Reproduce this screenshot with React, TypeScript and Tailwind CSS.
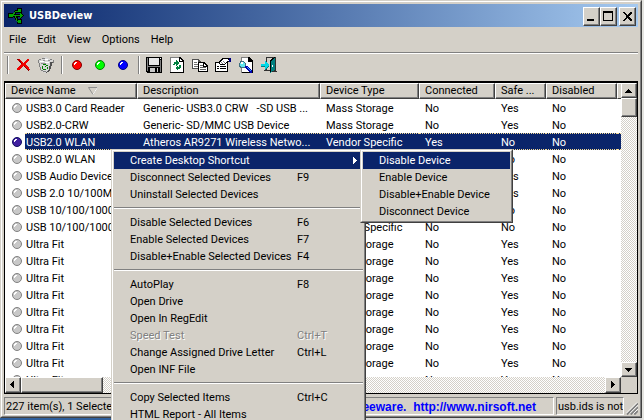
import type { ReactNode } from "react";

const BEVEL =
  "border border-t-white border-l-white border-r-[#404040] border-b-[#404040] shadow-[inset_-1px_-1px_0_#808080]";
const TRACK = "bg-[repeating-conic-gradient(#ffffff_0_25%,#d4d0c8_0_50%)] bg-[length:2px_2px]";

type Device = { name: string; description: string; type: string; connected: string; safe: string; disabled: string };

const storage = (name: string, description: string): Device => ({
  name,
  description,
  type: "Mass Storage",
  connected: "No",
  safe: "Yes",
  disabled: "No",
});
const vendor = (name: string, description: string, connected: string): Device => ({
  name,
  description,
  type: "Vendor Specific",
  connected,
  safe: "No",
  disabled: "No",
});

const devices: Device[] = [
  storage("USB3.0 Card Reader", "Generic- USB3.0 CRW   -SD USB ..."),
  storage("USB2.0-CRW", "Generic- SD/MMC USB Device"),
  vendor("USB2.0 WLAN", "Atheros AR9271 Wireless Netwo...", "Yes"),
  vendor("USB2.0 WLAN", "", "No"),
  { ...storage("USB Audio Device", ""), type: "Audio" },
  { ...storage("USB 2.0 10/100M", ""), type: "" },
  vendor("USB 10/100/1000", "", "No"),
  vendor("USB 10/100/1000", "", "No"),
  ...Array.from({ length: 9 }, () => storage("Ultra Fit", "")),
];

const columns = [
  { label: "Device Name", width: "w-[132px]" },
  { label: "Description", width: "w-[183px]" },
  { label: "Device Type", width: "w-[99px]" },
  { label: "Connected", width: "w-[76px]" },
  { label: "Safe ...", width: "w-[51px]" },
  { label: "Disabled", width: "w-[71px]" },
];

function Icon({ children, size = 16 }: { children: ReactNode; size?: number }) {
  return (
    <svg width={size} height={size} viewBox={`0 0 ${size} ${size}`} shapeRendering="crispEdges" aria-hidden="true">
      {children}
    </svg>
  );
}

function UsbLogo() {
  return (
    <svg width="16" height="16" viewBox="0 0 16 16" shapeRendering="crispEdges" aria-hidden="true">
      <path d="M4 7h10M6 7L8 3h3M7 8l3 5h2" fill="none" stroke="#000" strokeWidth="3" />
      <path d="M0 5h5v5H0zM9 0h5v5H9zM9 11h5v5H9zM12 4l4 3-4 4z" fill="#000" />
      <path d="M4 7h9M5 7l3-4h2M7 7l2 6h2" fill="none" stroke="#0a9a0a" strokeWidth="1" />
      <path d="M1 6h4v3H1zM10 1h3v3h-3zM10 12h3v3h-3zM12 5l3 2-3 3z" fill="#00a800" />
    </svg>
  );
}

function Cross() {
  return (
    <Icon>
      <path d="M2 2h3l3 4 4-4h2v1l-4 4 4 4 1 2h-2l-5-4-4 4H2v-2l4-4-4-4z" fill="#f00000" />
      <path d="M2 2h1l4 5M9 9l5 5" stroke="#900000" fill="none" />
    </Icon>
  );
}

function Recycle() {
  return (
    <Icon>
      <path d="M1 3l4-2 2-1 3 1 5 2-1 3-2 8-5 2-5-3z" fill="#d8d8d8" />
      <path d="M12 5h3l-3 9-4 2v-1l3-2z" fill="#505050" />
      <path d="M0 3h1v3H0zM1 6h1v4H1zM2 10h1v3H2zM3 13h2v1H3zM5 14h3v1H5zM1 2h2v1H1zM4 1h3v1H4zM12 2h2v1h-2zM15 3h1v3h-1z" fill="#808080" />
      <path d="M2 4h4v1H2zM7 2h3v1H7zM7 5h4v1H7z" fill="#fff" />
      <path d="M5 3h2v1H5zM10 3h2v1h-2zM3 6h5v1H3z" fill="#909090" />
      <path d="M5 7h3v1H5zM4 9h1v3H4zM8 8h2v1H8zM9 10h1v2H9zM5 12h3v1H5zM7 9h1v1H7z" fill="#008000" />
    </Icon>
  );
}

function Ball({ fill, edge }: { fill: string; edge: string }) {
  return (
    <svg width="10" height="10" viewBox="0 0 10 10" className="shrink-0" aria-hidden="true">
      <circle cx="5" cy="5" r="4.5" fill={fill} stroke={edge} />
      <path d="M3 2h2v1H4v1H3v1H2V3h1z" fill="#fff" shapeRendering="crispEdges" />
    </svg>
  );
}

function Floppy() {
  return (
    <Icon>
      <path d="M0 0h16v16H1l-1-1z" fill="#000" />
      <path d="M1 1h1v13H1zM14 3h1v12h-1zM2 9h12v1H2z" fill="#808080" />
      <path d="M3 1h10v7H3z" fill="#e8e8e8" />
      <path d="M14 1h1v1h-1z" fill="#fff" />
      <path d="M4 11h8v4H4z" fill="#c8c8c8" />
      <path d="M9 11h2v4H9z" fill="#000" />
    </Icon>
  );
}

function Refresh() {
  return (
    <Icon>
      <path d="M1 0h10l4 4v12H1z" fill="#808080" />
      <path d="M2 1h8v4h4v10H2z" fill="#fff" />
      <path d="M10 0h1l4 4v1h-5zM14 5h1v11H1v-1h13z" fill="#000" />
      <path d="M11 2l2 2h-2z" fill="#fff" />
      <path d="M4 7h1V5h2V3l3 3-3 3V7H6v1H4zM12 8v3h-1v1H9v2l-3-3 3-3v2h1V8z" fill="#008040" />
    </Icon>
  );
}

function Copy() {
  return (
    <Icon>
      <path d="M0 2h6l3 3v7H0z" fill="#505050" />
      <path d="M1 3h5v3h2v5H1z" fill="#fff" />
      <path d="M2 5h3v1H2zM2 7h5v1H2zM2 9h5v1H2z" fill="#707070" />
      <path d="M6 5h6l4 4v6H6z" fill="#000" />
      <path d="M7 6h4v4h4v4H7zM12 7l2 2h-2z" fill="#fff" />
      <path d="M8 8h3v1H8zM8 10h6v1H8zM8 12h6v1H8z" fill="#606060" />
    </Icon>
  );
}

function Properties() {
  return (
    <Icon>
      <path d="M0 5h13v10H0z" fill="#000" />
      <path d="M1 6h11v8H1z" fill="#fff" />
      <path d="M2 9h2v1H2zM5 9h6v1H5zM2 11h2v1H2zM5 11h6v1H5z" fill="#000" />
      <path d="M3 6l4-5h7l1 1v3h-3l-3 3H7L5 8z" fill="#000" />
      <path d="M4 6l4-4h5v1h1v1h-2L9 7H7L6 7z" fill="#fff" />
      <path d="M6 5h1v1H6zM8 4h1v1H8zM7 6h1v1H7zM9 5h1v1H9z" fill="#808080" />
      <path d="M14 1h2v4h-2z" fill="#000080" />
    </Icon>
  );
}

function Find() {
  return (
    <Icon>
      <path d="M3 0h8l4 4v12H3z" fill="#808080" />
      <path d="M4 1h7v4h3v10H4z" fill="#fff" />
      <path d="M10 0h1l4 4v1h-5zM14 5h1v11H4v-1h10z" fill="#000" />
      <path d="M2 4h4v1h1v1h1v4H7v1H2v-1H1V6h1z" fill="#407080" />
      <path d="M2 6h1V5h3v1h1v4H3V9H2z" fill="#60e8f0" />
      <path d="M3 5h2v2H3z" fill="#fff" />
      <path d="M7 9h2l5 5v2h-2l-5-5z" fill="#0000b0" />
      <path d="M8 10h1l4 4v1z" fill="#30a0ff" />
    </Icon>
  );
}

function Exit() {
  return (
    <Icon>
      <path d="M5 0h10v14h1v1H9v-1h4V1H6v5H5zM5 10h1v3h3v1H3v-1h2z" fill="#303030" />
      <path d="M6 1h4v12H6z" fill="#d4d0c8" />
      <path d="M9 3l5-3v13l-5 3z" fill="#008080" />
      <path d="M9 3l5-3v1l-4 3v10l-1 2z" fill="#000" />
      <path d="M11 8h1v2h-1z" fill="#fff" />
      <path d="M0 7h4V4l4 4-4 4V9H0z" fill="#00d8e8" />
      <path d="M0 9h4v3l4-4v1l-4 4v-3H0z" fill="#008080" />
    </Icon>
  );
}

const toolbar: { label: string; icon: ReactNode }[][] = [
  [
    { label: "Uninstall selected devices", icon: <Cross /> },
    { label: "Disconnect selected devices", icon: <Recycle /> },
  ],
  [
    { label: "Disable", icon: <Ball fill="#ff0000" edge="#800000" /> },
    { label: "Enable", icon: <Ball fill="#00ff00" edge="#008000" /> },
    { label: "Disable and enable", icon: <Ball fill="#0000ff" edge="#000080" /> },
  ],
  [
    { label: "Save", icon: <Floppy /> },
    { label: "Refresh", icon: <Refresh /> },
    { label: "Copy", icon: <Copy /> },
    { label: "Properties", icon: <Properties /> },
    { label: "Find", icon: <Find /> },
    { label: "Exit", icon: <Exit /> },
  ],
];

function BevelButton({ label, className, children }: { label: string; className: string; children: ReactNode }) {
  return (
    <button aria-label={label} className={`flex shrink-0 items-center justify-center bg-[#d4d0c8] ${BEVEL} ${className}`}>
      {children}
    </button>
  );
}

function Arrow({ d }: { d: string }) {
  return (
    <Icon size={8}>
      <path d={d} fill="#000" />
    </Icon>
  );
}

function TitleBar() {
  return (
    <header className="flex h-[23px] shrink-0 items-center bg-linear-to-r from-[#0a246a] to-[#a6caf0] pt-px pr-[2px] pl-1 text-white">
      <UsbLogo />
      <h1 className="flex-1 pl-[5px] font-['DejaVu_Sans_Condensed','DejaVu_Sans',sans-serif] text-[11px] font-bold">USBDeview</h1>
      <BevelButton label="Minimize" className="h-[19px] w-[17px]">
        <Icon size={11}>
          <path d="M1 8h7v2H1z" fill="#000" />
        </Icon>
      </BevelButton>
      <BevelButton label="Maximize" className="h-[19px] w-[17px]">
        <Icon size={11}>
          <path d="M0 0h10v10H0zM1 2v7h8V2z" fill="#000" fillRule="evenodd" />
        </Icon>
      </BevelButton>
      <BevelButton label="Close" className="ml-[2px] h-[19px] w-[17px]">
        <Icon size={11}>
          <path d="M1 1h2l2 3h1l2-3h2v1L7 5v1l3 3v1H8L6 7H5l-2 3H1V9l3-3V5L1 2z" fill="#000" />
        </Icon>
      </BevelButton>
    </header>
  );
}

function DeviceRow({ device, selected }: { device: Device; selected: boolean }) {
  const cells = [device.description, device.type, device.connected, device.safe, device.disabled];
  const paint = selected
    ? "bg-[#0a246a] text-white border-y border-dotted border-[#f5db95]"
    : "border-y border-transparent";
  return (
    <tr className="h-[17px]">
      <td className="p-0">
        <div className="flex items-center pl-[7px]">
          <Ball fill={selected ? "#4020a0" : "#c8c8c8"} edge={selected ? "#101060" : "#808080"} />
          <span className={`ml-[3px] h-[17px] flex-1 overflow-hidden pl-px leading-[17px] ${paint}`}>{device.name}</span>
        </div>
      </td>
      {cells.map((cell, i) => (
        <td key={i} className="p-0">
          <div className={`h-[17px] overflow-hidden pl-[6px] leading-[17px] ${paint}`}>{cell}</div>
        </td>
      ))}
      <td className="p-0">
        <div className={`h-[17px] ${paint}`} />
      </td>
    </tr>
  );
}

function DeviceList() {
  return (
    <main className="flex min-h-0 flex-1 flex-col border border-t-2 border-black bg-white">
      <div className="flex min-h-0 flex-1">
        <div className="min-w-0 flex-1 overflow-hidden">
          <table className="w-full table-fixed border-separate border-spacing-0 text-left whitespace-pre">
            <thead>
              <tr className="h-4">
                {columns.map((c, i) => (
                  <th key={c.label} className={`bg-[#d4d0c8] p-0 font-normal ${c.width}`}>
                    <div className={`flex h-4 items-center gap-[12px] pl-[5px] leading-[14px] ${BEVEL}`}>
                      {c.label}
                      {i === 0 && (
                        <svg width="10" height="8" viewBox="0 0 10 8" aria-hidden="true">
                          <path d="M0.5 0.5h9L5 7.5z" fill="#d4d0c8" stroke="#909090" />
                          <path d="M9.5 0.5L5 7.5" stroke="#fff" />
                        </svg>
                      )}
                    </div>
                  </th>
                ))}
                <th className="bg-[#d4d0c8] p-0">
                  <div className="h-4 border border-r-0 border-t-white border-b-[#404040] border-l-white" />
                </th>
              </tr>
            </thead>
            <tbody>
              {devices.map((d, i) => (
                <DeviceRow key={i} device={d} selected={i === 2} />
              ))}
            </tbody>
          </table>
        </div>
        <div className={`flex w-4 shrink-0 flex-col ${TRACK}`}>
          <BevelButton label="Scroll up" className="h-[15px]">
            <Arrow d="M3 2h1v1h1v1h1v1h1v1H0V5h1V4h1V3h1z" />
          </BevelButton>
          <div className={`h-[19px] bg-[#d4d0c8] ${BEVEL}`} />
          <div className="flex-1" />
          <BevelButton label="Scroll down" className="h-[15px]">
            <Arrow d="M0 2h7v1H6v1H5v1H4v1H3V5H2V4H1V3H0z" />
          </BevelButton>
        </div>
      </div>
      <div className={`flex h-4 shrink-0 ${TRACK}`}>
        <BevelButton label="Scroll left" className="w-4">
          <Arrow d="M5 0v7H4V6H3V5H2V4H1V3h1V2h1V1h1V0z" />
        </BevelButton>
        <div className={`w-[82px] bg-[#d4d0c8] ${BEVEL}`} />
        <div className="flex-1" />
        <BevelButton label="Scroll right" className="w-4">
          <Arrow d="M2 0h1v1h1v1h1v1h1v1H5v1H4v1H3v1H2z" />
        </BevelButton>
        <div className="w-4 bg-[#d4d0c8]" />
      </div>
    </main>
  );
}

function StatusBar() {
  const cell = "h-[18px] overflow-hidden border border-t-[#808080] border-l-[#808080] border-r-white border-b-white leading-[18px] whitespace-pre";
  return (
    <footer className="flex shrink-0 gap-[2px] pt-[3px]">
      <div className={`w-[240px] pl-px ${cell}`}>227 item(s), 1 Selected</div>
      <div className={`flex flex-1 justify-end pr-[17px] font-['Liberation_Sans',sans-serif] text-[12px] font-bold text-[#0000ff] ${cell}`}>
        <span>NirSoft Freeware.  </span>
        <a href="http://www.nirsoft.net">http://www.nirsoft.net</a>
      </div>
      <div className={`w-[68px] pl-px ${cell}`}>usb.ids is not</div>
      <div className="flex w-[12px] items-end justify-end">
        <svg width="12" height="13" viewBox="0 0 13 13" aria-hidden="true">
          <path d="M1 13L13 1M5 13L13 5M9 13L13 9" stroke="#808080" strokeWidth="2" />
          <path d="M0 12L12 0M4 12L13 3M8 12L13 7" stroke="#fff" />
        </svg>
      </div>
    </footer>
  );
}

type Item = { label: string; keys?: string; disabled?: boolean; active?: boolean; submenu?: boolean };

const contextGroups: Item[][] = [
  [
    { label: "Create Desktop Shortcut", active: true, submenu: true },
    { label: "Disconnect Selected Devices", keys: "F9" },
    { label: "Uninstall Selected Devices" },
  ],
  [
    { label: "Disable Selected Devices", keys: "F6" },
    { label: "Enable Selected Devices", keys: "F7" },
    { label: "Disable+Enable Selected Devices", keys: "F4" },
  ],
  [
    { label: "AutoPlay", keys: "F8" },
    { label: "Open Drive" },
    { label: "Open In RegEdit" },
    { label: "Speed Test", keys: "Ctrl+T", disabled: true },
    { label: "Change Assigned Drive Letter", keys: "Ctrl+L" },
    { label: "Open INF File" },
  ],
  [{ label: "Copy Selected Items", keys: "Ctrl+C" }, { label: "HTML Report - All Items" }],
];

const shortcutGroups: Item[][] = [
  [
    { label: "Disable Device", active: true },
    { label: "Enable Device" },
    { label: "Disable+Enable Device" },
    { label: "Disconnect Device" },
  ],
];

function Menu({ groups, className }: { groups: Item[][]; className: string }) {
  return (
    <div role="menu" className={`absolute border border-[#d4d0c8] border-r-[#404040] border-b-[#404040] bg-[#d4d0c8] ${className}`}>
      <div className="border border-t-white border-r-[#808080] border-b-[#808080] border-l-white p-px">
        {groups.map((group, g) => (
          <div key={g}>
            {g > 0 && <hr className="mt-1 mb-[5px] h-[2px] border-0 border-t border-b border-t-[#808080] border-b-white" />}
            {group.map((item) => (
              <button
                key={item.label}
                role="menuitem"
                disabled={item.disabled}
                className={`flex h-[17px] w-full items-center pl-4 text-left leading-[17px] whitespace-nowrap ${
                  item.active ? "bg-[#0a246a] text-white" : ""
                } ${item.disabled ? "text-[#808080] [text-shadow:1px_1px_0_#fff]" : ""}`}
              >
                <span className="flex-1">{item.label}</span>
                {item.keys && <span className="w-[66px]">{item.keys}</span>}
                {item.submenu && (
                  <svg width="4" height="7" viewBox="0 0 4 7" className="mr-[6px]" shapeRendering="crispEdges" aria-hidden="true">
                    <path d="M0 0h1v1h1v1h1v1h1v1H3v1H2v1H1v1H0z" fill="#fff" />
                  </svg>
                )}
              </button>
            ))}
          </div>
        ))}
      </div>
    </div>
  );
}

export default function App() {
  return (
    <div className="relative flex h-screen overflow-hidden bg-linear-to-r from-[#2f5f9c] from-40% to-[#d8d8d8] to-40% font-['Roboto',sans-serif] text-[11px] text-black">
      <div className="mb-[2px] flex min-w-0 flex-1 flex-col border border-t-[#d4d0c8] border-r-[#404040] border-b-[#404040] border-l-[#d4d0c8] bg-[#d4d0c8]">
        <div className="flex min-h-0 flex-1 flex-col border border-t-white border-r-[#808080] border-b-[#808080] border-l-white p-[2px] pb-px">
          <TitleBar />
          <nav className="flex h-[25px] shrink-0 items-center gap-[11px] pt-[2px] pl-[5px]">
            {["File", "Edit", "View", "Options", "Help"].map((m) => (
              <button key={m}>{m}</button>
            ))}
          </nav>
          <div className="flex h-[29px] shrink-0 items-start border-t border-[#808080] pt-px shadow-[inset_0_1px_0_#fff]">
            {toolbar.map((group, g) => (
              <div key={g} className="flex items-center">
                <div className="mx-[3px] h-[18px] w-[2px] border-r border-l border-l-[#808080] border-r-white" />
                {group.map((b) => (
                  <button key={b.label} aria-label={b.label} className="flex h-[22px] w-[23px] items-center justify-center pr-px">
                    {b.icon}
                  </button>
                ))}
              </div>
            ))}
          </div>
          <DeviceList />
          <StatusBar />
        </div>
      </div>
      <div className="w-[2px] bg-[#e4e4e0]" />
      <Menu groups={contextGroups} className="top-[149px] left-[111px] w-[255px]" />
      <Menu groups={shortcutGroups} className="top-[149px] left-[360px] w-[153px]" />
    </div>
  );
}
